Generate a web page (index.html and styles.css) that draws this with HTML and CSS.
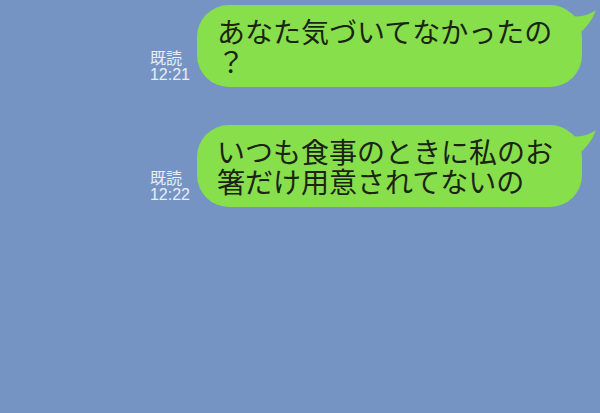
FILE: index.html
```html
<!DOCTYPE html>
<html>
<head>
  <title>Chat</title>
  <link rel="stylesheet" href="styles.css">
</head>
<body>
  <div class="chat">
    <div class="msg-row">
      <div class="meta">
        <div class="read">既読</div>
        <div class="time">12:21</div>
      </div>
      <div class="bubble">
        <div class="line">あなた気づいてなかったの</div>
        <div class="line">？</div>
        <svg class="tail" width="26" height="32" viewBox="0 0 26 32"><path d="M0 10 Q13 12 24 4 Q18 20 6 28 Z" fill="#87df4b"/></svg>
      </div>
    </div>
    <div class="msg-row">
      <div class="meta">
        <div class="read">既読</div>
        <div class="time">12:22</div>
      </div>
      <div class="bubble">
        <div class="line">いつも食事のときに私のお</div>
        <div class="line">箸だけ用意されてないの</div>
        <svg class="tail" width="26" height="32" viewBox="0 0 26 32"><path d="M0 10 Q13 12 24 4 Q18 20 6 28 Z" fill="#87df4b"/></svg>
      </div>
    </div>
  </div>
</body>
</html>
```

FILE: styles.css
```css
html, body {
  margin: 0;
  height: 100%;
}

body {
  background-color: #7594c3;
  font-family: "Noto Sans CJK JP", "Noto Sans", sans-serif;
}

.chat {
  display: flex;
  flex-direction: column;
  gap: 38px;
  padding: 5px 18px 0 0;
}

.msg-row {
  display: flex;
  justify-content: flex-end;
  align-items: flex-end;
  gap: 7px;
}

.meta {
  padding-bottom: 3px;
  color: #e8eef7;
  font-size: 16px;
  line-height: 18px;
}

.meta .time {
  font-family: "Liberation Sans", Arial, sans-serif;
}

.bubble {
  position: relative;
  width: 345px;
  padding: 11px 20px;
  background-color: #87df4b;
  border-radius: 32px;
  color: #1b2414;
  font-size: 28px;
  white-space: nowrap;
}

.bubble .line {
  height: 30px;
  line-height: 30px;
}

.tail {
  position: absolute;
  left: calc(100% - 10px);
  top: 1px;
}
```
